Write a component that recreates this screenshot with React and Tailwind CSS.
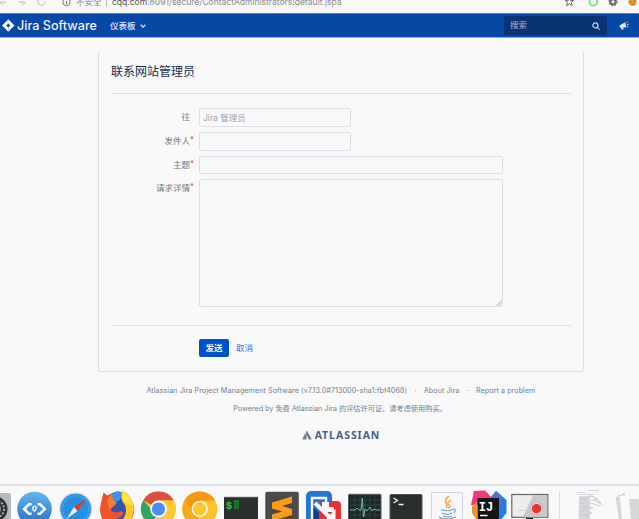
import React from "react";

function BrowserBar() {
  return (
    <div className="flex h-[13px] items-start overflow-hidden bg-[#f9f9f9] text-[9px] text-[#85858b]">
      <svg className="h-[13px] w-[76px] shrink-0" viewBox="0 0 76 13" fill="none" stroke="#b9b9bd" strokeWidth="1">
        <path d="M0 2.2H6M0 2.2L3 5.2M19 2.2H25.5M22.6 5.2L25.5 2.2" />
        <path d="M45 1.5A3.6 3.6 0 1 1 38.6 -.5" />
        <circle cx="66.5" cy="2" r="3.7" stroke="#77777b" />
        <path d="M66.5 1V4.2" stroke="#77777b" />
      </svg>
      <span className="-mt-[4px] w-[30px] shrink-0 text-[8.5px] leading-[13px]">不安全</span>
      <span className="h-[7px] w-px shrink-0 bg-[#bcbcc0]" />
      <span className="-mt-[4px] ml-[5px] flex-1 whitespace-nowrap text-[8.6px] leading-[13px] tracking-[-0.05px] text-[#8b8b91]">
        <span className="text-[#55555a]">cqq.com</span>:8091/secure/ContactAdministrators!default.jspa
      </span>
      <svg className="h-[13px] w-[79px] shrink-0" viewBox="560 0 79 13" fill="none">
        <path d="M569.4 -3L570.6 .6H573.5L571.3 2.5L572.2 5.6L569.4 3.9L566.6 5.6L567.5 2.5L565.3 .6H568.2Z" stroke="#66666a" />
        <circle cx="593.4" cy="1.8" r="3.8" stroke="#8fda94" strokeWidth="2" />
        <circle cx="613" cy="1.8" r="2.6" stroke="#6d6d6d" strokeWidth="2.2" />
        <circle cx="613" cy="1.8" r="4" stroke="#6d6d6d" strokeWidth="1.2" strokeDasharray="1.6 1.5" />
        <circle cx="632.5" cy="1.8" r="4.2" fill="#e99a35" />
        <path d="M630 2h1.5M633 4h1.5M634 1h1" stroke="#8e5016" />
      </svg>
    </div>
  );
}

function Header() {
  return (
    <header className="flex h-[25px] items-center border-t border-b border-t-[#5e7fae] border-b-[#8fabd3] bg-[#0747a6] text-white">
      <svg className="ml-[2px] h-[13px] w-[13px] shrink-0" viewBox="0 0 13 13">
        <path d="M6.3 .3L12.5 6.5L6.3 12.7L.1 6.5Z" fill="#fff" />
        <path d="M6.3 4.4L8.4 6.5L6.3 8.6L4.2 6.5Z" fill="#0747a6" />
        <path d="M6.3 .6Q4.9 2.6 6.3 4.4M6.3 8.6Q7.7 10.4 6.3 12.4" stroke="#7f9fd0" strokeWidth=".7" fill="none" />
      </svg>
      <span className="ml-[2px] w-[81px] shrink-0 whitespace-nowrap text-[12.6px] leading-[22px] font-medium text-[#f0f4fa]">Jira Software</span>
      <span className="ml-[12px] text-[8.5px] leading-[22px] font-medium text-[#e4ecf8]">仪表板</span>
      <svg className="ml-[4px] h-[6px] w-[6px]" viewBox="0 0 6 6" fill="none" stroke="#dbe5f5" strokeWidth="1.3">
        <path d="M.7 1.8L3 4.1L5.3 1.8" />
      </svg>
      <div className="ml-auto flex h-[19px] w-[103px] items-center justify-between rounded-[2px] bg-[#0b3272] pr-[7px] pl-[6px] text-[8.5px] text-[#a3b6d6]">
        搜索
        <svg className="h-[8px] w-[8px]" viewBox="0 0 8 8" fill="none" stroke="#c8d5ea" strokeWidth="1.2">
          <circle cx="3.4" cy="3.4" r="2.5" />
          <path d="M5.2 5.2L7.6 7.6" />
        </svg>
      </div>
      <svg className="mr-[10px] ml-[12px] h-[10px] w-[10px]" viewBox="0 0 10 10" fill="#e4ecf8">
        <path d="M.5 4.6L6 1.2L7.4 6.6L4.4 6.3L4.4 8.6L2.6 8.8L2.2 6.8L1.1 6.9Z" />
        <path d="M7 2.1L8.3 .7M7.8 3.6L9.8 3.1M8 5.2L9.6 6" stroke="#e4ecf8" strokeWidth=".8" />
      </svg>
    </header>
  );
}

function Row({ label, required, children }) {
  return (
    <div className="flex">
      <label className="relative mr-[9px] w-[79px] shrink-0 text-right text-[8.5px] leading-[19px] text-[#6f7a8e]">
        {label}
        {required && <span className="absolute -right-[4px] -top-[2px] text-[8px] leading-[19px] text-[#e2512f]">*</span>}
      </label>
      {children}
    </div>
  );
}

function ContactForm() {
  return (
    <main className="mt-[14px] ml-[98px] flex h-[320px] w-[486px] shrink-0 flex-col rounded-b-[3px] border-x border-b border-[#dcdfe6] px-[12px]">
      <h1 className="h-[42px] border-b border-[#dcdfe6] text-[12px] leading-[40px] text-[#172b4d]">联系网站管理员</h1>
      <form className="mt-[14px] flex flex-col">
        <div className="h-[24px]">
          <Row label="往">
            <div className="h-[19px] w-[152px] rounded-[2px] border border-[#dcdfe8] px-[3px] text-[8.5px] leading-[18px] text-[#98a0af]">Jira 管理员</div>
          </Row>
        </div>
        <div className="h-[24px]">
          <Row label="发件人" required>
            <div className="h-[19px] w-[152px] rounded-[2px] border border-[#dcdfe8]" />
          </Row>
        </div>
        <div className="h-[23px]">
          <Row label="主题" required>
            <div className="h-[18px] w-[304px] rounded-[2px] border border-[#dcdfe8]" />
          </Row>
        </div>
        <Row label="请求详情" required>
          <div className="flex h-[128px] w-[304px] items-end justify-end rounded-[2px] border border-[#dcdfe8]">
            <svg className="h-[6px] w-[6px]" viewBox="0 0 6 6" stroke="#8a8a8a" strokeWidth=".7">
              <path d="M.5 5.5L5.5 .5M3 5.5L5.5 3" />
            </svg>
          </div>
        </Row>
      </form>
      <div className="mt-[18px] flex border-t border-[#dee1e6] pt-[13px] pl-[88px] text-[8.5px] leading-[18px]">
        <button className="h-[18px] w-[30px] rounded-[2px] bg-[#0052cc] font-bold text-white">发送</button>
        <a className="ml-[7px] text-[#3f6fce]">取消</a>
      </div>
    </main>
  );
}

function Footer() {
  return (
    <footer className="ml-[98px] flex w-[486px] flex-col items-center pt-[12px] text-[7.2px] leading-[14px] text-[#737e92]">
      <div className="flex w-[389px] justify-between whitespace-nowrap">
        <span className="tracking-[0.055px]">Atlassian Jira Project Management Software (v7.13.0#713000-sha1:fbf4068)</span>
        <span className="font-bold text-[#a5adba]">·</span>
        <span className="tracking-[0.055px]">About Jira</span>
        <span className="font-bold text-[#a5adba]">·</span>
        <span className="tracking-[0.055px]">Report a problem</span>
      </div>
      <div className="mt-[4px] mr-[2px] whitespace-nowrap">Powered by 免费 Atlassian Jira 的评估许可证。请考虑使用购买。</div>
      <div className="mt-[12px] flex items-center gap-[3px]">
        <svg className="h-[10px] w-[10px]" viewBox="0 0 10 10" fill="#6b7a93">
          <path d="M4.7 .3Q3.5 2.3 5 5.2L6.8 9.5H9.8Z" />
          <path d="M2.5 4.2Q4.6 6 4.3 9.5H.3Z" />
          <path d="M4.7 1L2.8 4.4Q4.6 6 4.5 9.5L5.2 7.6L5 5.2Z" fill="#8693a8" />
        </svg>
        <span className="font-['Noto_Sans'] text-[10.5px] leading-[14px] font-bold tracking-[0.95px] text-[#4c5f80]">ATLASSIAN</span>
      </div>
    </footer>
  );
}

function Dock() {
  return (
    <div className="mt-auto flex h-[35px] shrink-0 overflow-hidden border-t-2 border-[#dde1ea] bg-[#f9f9f9]">
      <svg className="h-[33px] w-[14px] shrink-0" viewBox="0 486 14 33">
        <rect x="-20" y="493" width="31" height="33" rx="2" fill="#b6b9bf" />
        <circle cx="-5" cy="509" r="12.5" fill="#2e3135" />
        <circle cx="-5" cy="509" r="9" fill="none" stroke="#a3a7ac" strokeWidth="2" strokeDasharray="2 1.5" />
        <circle cx="-5" cy="509" r="6" fill="#858a90" />
      </svg>
      <svg className="h-[33px] w-[41px] shrink-0" viewBox="14 486 41 33">
        <defs><linearGradient id="sync" x1="0" y1="0" x2="0" y2="1"><stop stopColor="#64b5eb" /><stop offset="1" stopColor="#1f6fc9" /></linearGradient></defs>
        <circle cx="34.5" cy="509" r="17.3" fill="url(#sync)" />
        <path d="M31.5 504.2H29L24.2 509L29 513.8H31.5M37.5 504.2H40L44.8 509L40 513.8H37.5" fill="none" stroke="#fff" strokeWidth="2.6" />
        <path d="M34.5 505.5l2.3 1v2.4q0 1.8-2.3 3.2q-2.3-1.4-2.3-3.2v-2.4z" fill="#e6f2fc" />
        <path d="M34.5 507v3" stroke="#3582d2" strokeWidth="1" />
      </svg>
      <svg className="h-[33px] w-[41px] shrink-0" viewBox="55 486 41 33">
        <circle cx="75.7" cy="509" r="16.6" fill="#cbd8e5" />
        <circle cx="75.7" cy="509" r="15.3" fill="#258fe0" />
        <circle cx="75.7" cy="509" r="13.3" fill="none" stroke="#8bc6f1" strokeWidth="1.5" strokeDasharray=".6 1.5" />
        <path d="M86 499L74 507L77.5 511Z" fill="#e0392f" />
        <path d="M66.5 519L74 507L77.5 511Z" fill="#edf0f3" />
      </svg>
      <svg className="h-[33px] w-[42px] shrink-0" viewBox="96 486 42 33">
        <circle cx="117.3" cy="509.5" r="17" fill="#ef5a26" />
        <path d="M101.5 501L103.5 492.5L109 497Z" fill="#ef4a25" />
        <path d="M108 497Q117 488 124 494Q132 500 129 512L126 522H112Q104 512 108 497Z" fill="#2a55b4" />
        <path d="M111 495Q118 489 122 493L120 500L113 503Z" fill="#3f92e4" />
        <path d="M103 497Q107 500 113 500Q117 502 115 506L110 509Q114 515 121 511L124 513Q120 520 112 519H102Q98 508 103 497Z" fill="#ef5427" />
        <path d="M107 501Q108 496 112 494L113 500L117 503L113 506L110 510Z" fill="#f77c2b" />
        <path d="M123 490Q134 497 134 510L131 520H122Q128 514 125 505Q119 499 123 490Z" fill="#ffc72e" />
        <path d="M123 490Q131 497 133 506L126 503Q119 499 123 490Z" fill="#ffe343" />
      </svg>
      <svg className="h-[33px] w-[41px] shrink-0" viewBox="138 486 41 33">
        <circle cx="158.5" cy="509" r="17.6" fill="#fbca35" />
        <path d="M158.5 509L143.3 500.2Q148 491.4 158.5 491.4T173.7 500.2H158.5Z" fill="#dc4f43" />
        <path d="M143.3 500.2A17.6 17.6 0 0 0 150 524.5L158.5 514L151 509Z" fill="#2fa463" />
        <circle cx="158.5" cy="509" r="8.4" fill="#fafafa" />
        <circle cx="158.5" cy="509" r="6.6" fill="#4d8df2" />
      </svg>
      <svg className="h-[33px] w-[41px] shrink-0" viewBox="179 486 41 33">
        <circle cx="199.8" cy="509" r="17.6" fill="#fbc331" />
        <path d="M199.8 500.5H215A17.6 17.6 0 0 0 184.6 500.2L192 512Z" fill="#f79612" />
        <path d="M184.6 500.2A17.6 17.6 0 0 0 191 524L199 517L192 510Z" fill="#f5aa20" />
        <circle cx="199.8" cy="509" r="8.2" fill="#fdf3d4" />
        <circle cx="199.8" cy="509" r="6.4" fill="#fcc62c" />
      </svg>
      <svg className="h-[33px] w-[42px] shrink-0" viewBox="220 486 42 33">
        <path d="M224 497H258V521H224Z" fill="#2b302f" />
        <path d="M224 497.3H258" stroke="#5a5f5e" />
        <text x="226" y="508.5" className="fill-[#20d63c] font-['Liberation_Mono'] text-[10px] font-bold">$</text>
        <rect x="234" y="500" width="5" height="9" fill="#18722b" />
      </svg>
      <svg className="h-[33px] w-[41px] shrink-0" viewBox="262 486 41 33">
        <rect x="265.3" y="491.8" width="33.5" height="34" rx="2" fill="#4b4b4b" />
        <path d="M272 502.5L292 496.5V503L282 506L292 509V515L272 521V514.5L282.5 511.5L272 508.5Z" fill="#fc9a1b" />
      </svg>
      <svg className="h-[33px] w-[41px] shrink-0" viewBox="303 486 41 33">
        <rect x="306" y="491" width="26" height="34" rx="5" fill="#2675cf" />
        <rect x="320" y="501" width="21" height="26" rx="4" fill="#e33035" />
        <path d="M312 519V498H326V502" fill="none" stroke="#fafafa" strokeWidth="2.4" />
        <path d="M320 512V519H327Z" fill="#e33035" />
        <path d="M322 502H329V507H334V512H322Z" fill="#fafafa" />
        <path d="M315 503L331 518.5" stroke="#fafafa" strokeWidth="4" />
        <path d="M335.5 509V521H324Z" fill="#fafafa" />
        <path d="M313.5 507L319 512.5V519H313.5Z" fill="#153f83" />
      </svg>
      <svg className="h-[33px] w-[41px] shrink-0" viewBox="344 486 41 33">
        <rect x="348.5" y="494.3" width="32.5" height="30" rx="1" fill="#1c2827" stroke="#555e5d" />
        <path d="M350 500H380M350 505H380M350 515H380M355 495V519M360 495V519M365 495V519M370 495V519M375 495V519" stroke="#35514d" strokeWidth=".6" />
        <path d="M350 510H355L357 508L359 510H361L362.3 498L363.5 517L365 509L367 511L370 507L372 511L374 509L376 510H380" fill="none" stroke="#7cc5be" strokeWidth=".9" />
      </svg>
      <svg className="h-[33px] w-[41px] shrink-0" viewBox="385 486 41 33">
        <rect x="390" y="494.5" width="32" height="30" rx="1" fill="#292e2d" stroke="#515655" />
        <path d="M393.5 498L397.5 500.5L393.5 503M398.5 504.5H403.5" fill="none" stroke="#eef1f1" strokeWidth="1.3" />
      </svg>
      <svg className="h-[33px] w-[41px] shrink-0" viewBox="426 486 41 33">
        <rect x="431.5" y="492.5" width="31" height="32" rx="1" fill="#f7f8fa" stroke="#cfd3da" />
        <path d="M449 496Q444 500 446 503T446 508M451 500Q446 503 449 505T448 508" fill="none" stroke="#efa23c" strokeWidth="1.3" />
        <path d="M441 509.5Q447 512 453 509.5M453 509Q457 509 454 513M442 513Q447 515.5 452 513M443 516Q447 518 452 516M439 517Q446 521 456 517" fill="none" stroke="#7599b7" strokeWidth="1.2" />
      </svg>
      <svg className="h-[33px] w-[42px] shrink-0" viewBox="467 486 42 33">
        <path d="M474 491L485 490.5L492 498V505H471Z" fill="#f5387c" />
        <path d="M472 506L477 502V520L472 513Z" fill="#e39335" />
        <path d="M491 497L496 491L506.5 500V513L500 521H489Z" fill="#287be2" />
        <path d="M491 497L496 491L502 496V505H491Z" fill="#5570cf" />
        <rect x="477.5" y="498" width="21.5" height="24" fill="#151515" />
        <text x="478.8" y="510.5" className="fill-white font-['Liberation_Mono'] text-[12px] font-bold">IJ</text>
        <path d="M480 515.5H487.5" stroke="#fff" strokeWidth="1.4" />
      </svg>
      <svg className="h-[33px] w-[41px] shrink-0" viewBox="509 486 41 33">
        <rect x="511.8" y="494.5" width="36" height="22.8" fill="#ececee" stroke="#666" strokeWidth="1.2" />
        <path d="M533 495.2H547.2V516.7H523Z" fill="#c8c9cc" />
        <path d="M517 498H519M518 510.5H525" stroke="#d2d3d6" />
        <circle cx="536.5" cy="508.7" r="6" fill="#f6e9e9" stroke="#999" strokeWidth=".5" />
        <circle cx="536.5" cy="508.7" r="4.8" fill="#e63432" />
        <path d="M526 518H533V520H526Z" fill="#222" />
      </svg>
      <svg className="h-[33px] w-[89px] shrink-0" viewBox="550 486 89 33" fill="none">
        <path d="M559.5 492V519" stroke="#d9dde5" />
        <path d="M579 496H590V519H578.5Z" fill="#d6d7db" />
        <path d="M577 492.5H586M588 490.5H599M579 494.5H594" stroke="#d7d8dd" />
        <path d="M580 499h7M579 503h5M581 507h8M579 511h6M580 515h9" stroke="#c6c8cd" />
        <path d="M589 496Q596 496 601 504L595 501M590 503L600 506M591 500h5M590 508h3M590 513h2" stroke="#cfd1d6" strokeWidth="1.3" />
        <path d="M616 497L620 496L622 519H619Z" fill="#dcdde1" />
        <path d="M616.5 497L620 519M618 496L625 494M624 496V493" stroke="#c7c9cf" />
        <path d="M629 499H640V519H631Z" fill="#d6d7db" />
      </svg>
    </div>
  );
}

export default function App() {
  return (
    <div className="flex h-[519px] w-[639px] flex-col overflow-hidden bg-[#f9f9f9] font-[Inter,'Noto_Sans_CJK_SC',sans-serif]">
      <BrowserBar />
      <Header />
      <ContactForm />
      <Footer />
      <Dock />
    </div>
  );
}
